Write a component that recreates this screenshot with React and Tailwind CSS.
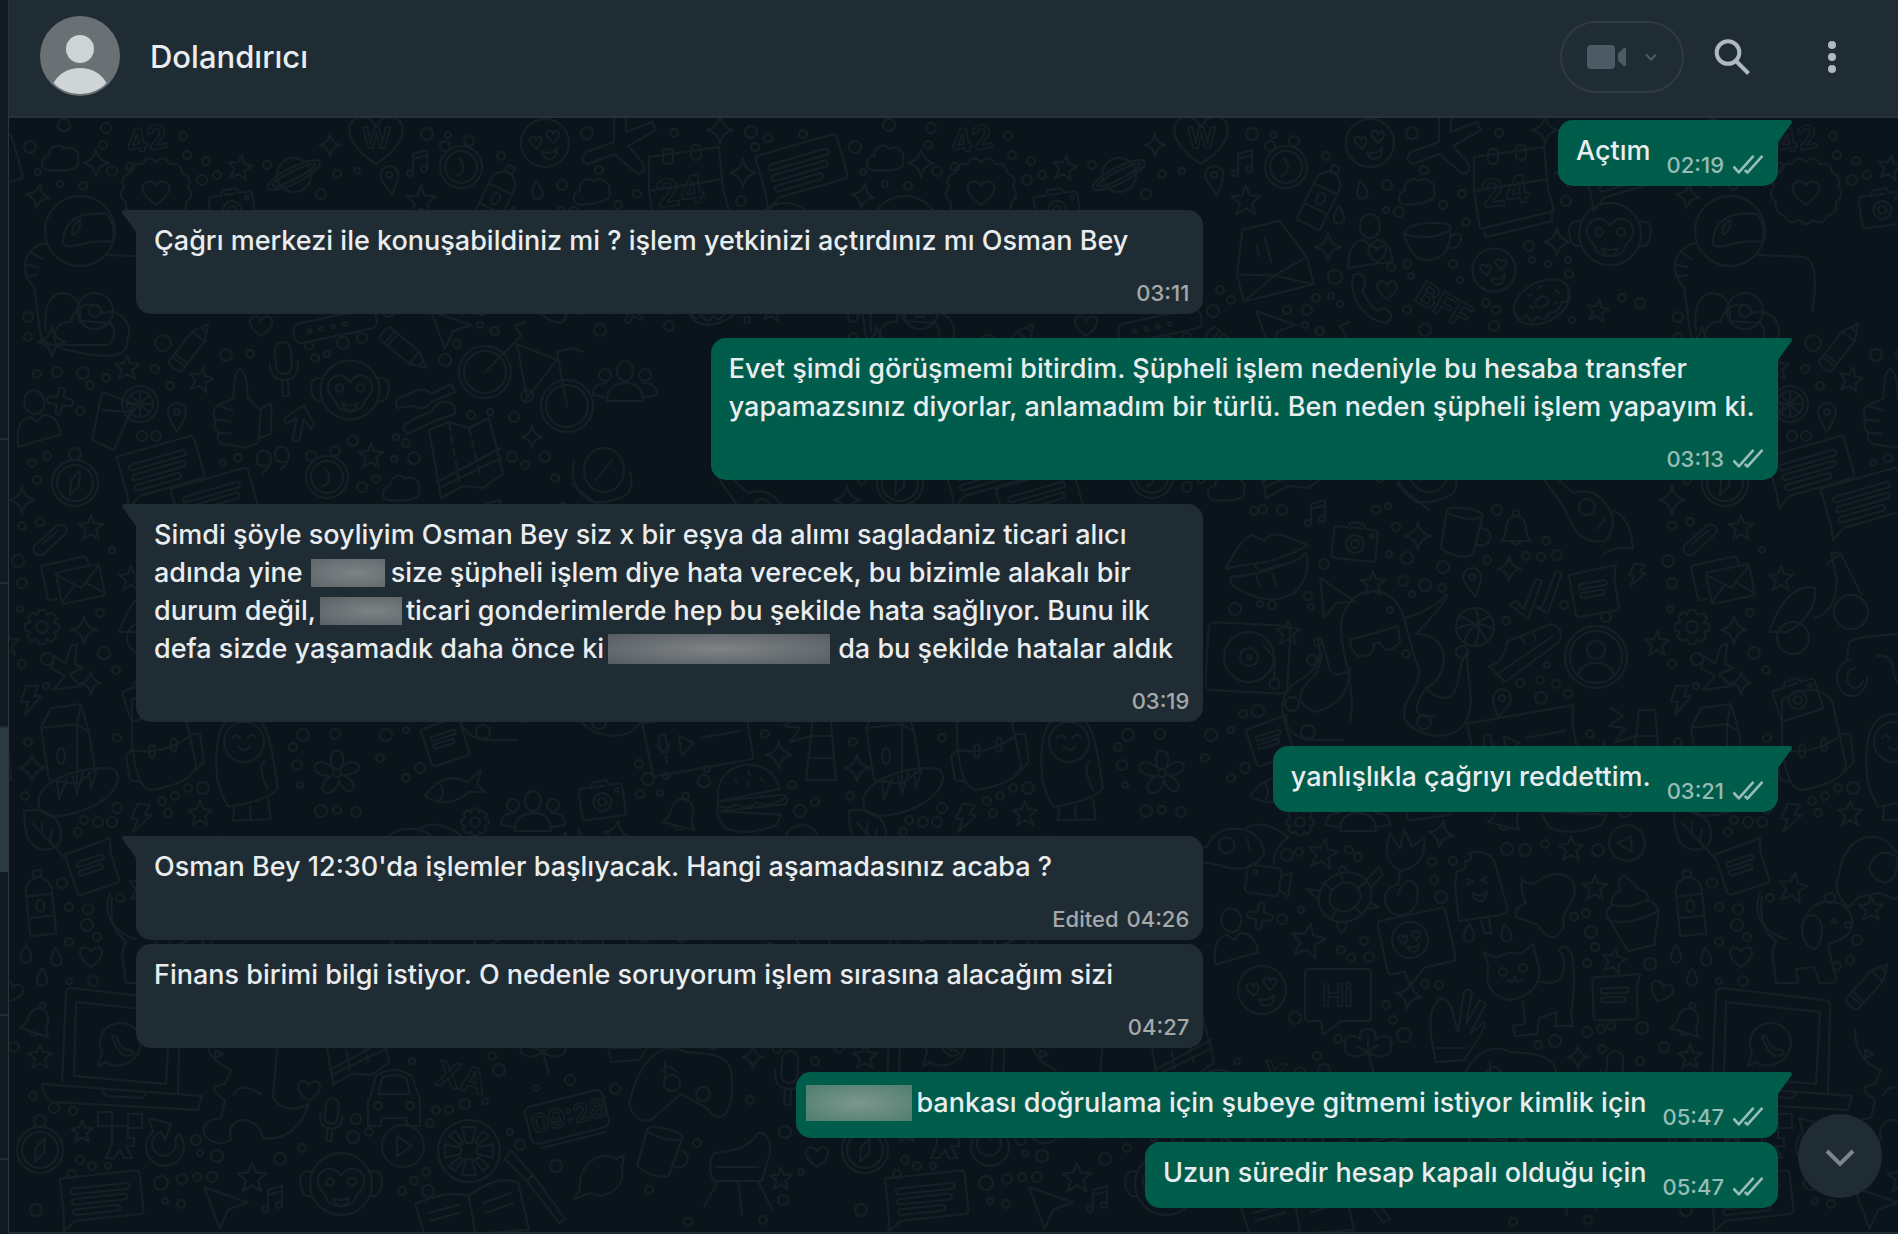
import React from 'react';

const MESSAGES = [
  { id: 1, out: true, tail: true, time: '02:19', lines: [['Açtım']] },
  {
    id: 2,
    tail: true,
    stacked: true,
    time: '03:11',
    lines: [['Çağrı merkezi ile konuşabildiniz mi ? işlem yetkinizi açtırdınız mı Osman Bey']],
  },
  {
    id: 3,
    out: true,
    tail: true,
    stacked: true,
    time: '03:13',
    lines: [
      ['Evet şimdi görüşmemi bitirdim. Şüpheli işlem nedeniyle bu hesaba transfer'],
      ['yapamazsınız diyorlar, anlamadım bir türlü. Ben neden şüpheli işlem yapayım ki.'],
    ],
  },
  {
    id: 4,
    tail: true,
    stacked: true,
    time: '03:19',
    lines: [
      ['Simdi şöyle soyliyim Osman Bey siz x bir eşya da alımı sagladaniz ticari alıcı'],
      ['adında yine', { mask: 'short' }, 'size şüpheli işlem diye hata verecek, bu bizimle alakalı bir'],
      ['durum değil,', { mask: 'medium' }, 'ticari gonderimlerde hep bu şekilde hata sağlıyor. Bunu ilk'],
      ['defa sizde yaşamadık daha önce ki', { mask: 'long' }, 'da bu şekilde hatalar aldık'],
    ],
  },
  { id: 5, out: true, tail: true, time: '03:21', lines: [['yanlışlıkla çağrıyı reddettim.']] },
  {
    id: 6,
    tail: true,
    stacked: true,
    edited: true,
    time: '04:26',
    lines: [["Osman Bey 12:30'da işlemler başlıyacak. Hangi aşamadasınız acaba ?"]],
  },
  {
    id: 7,
    stacked: true,
    time: '04:27',
    lines: [['Finans birimi bilgi istiyor. O nedenle soruyorum işlem sırasına alacağım sizi']],
  },
  {
    id: 8,
    out: true,
    tail: true,
    time: '05:47',
    lines: [[{ mask: 'green' }, 'bankası doğrulama için şubeye gitmemi istiyor kimlik için']],
  },
  { id: 9, out: true, time: '05:47', lines: [['Uzun süredir hesap kapalı olduğu için']] },
];

const MASKS = {
  short: 'ml-2 mr-1.5 h-7 w-[74px] bg-[radial-gradient(ellipse_at_60%_50%,#7d8285,#5f666a)]',
  medium: 'ml-1 mr-1 h-7 w-[82px] bg-[radial-gradient(ellipse_at_65%_50%,#7d8285,#5a6165)]',
  long: 'ml-1 mr-2 h-[30px] w-[222px] bg-[radial-gradient(ellipse_at_50%_50%,#7f8386,#565d62)]',
  green: '-ml-2 mr-1 h-9 w-[106px] bg-[radial-gradient(ellipse_at_50%_50%,#7e978d,#4d7e6e)]',
};

// Wallpaper shapes, each drawn around its own centre
const SHAPES = {
  star: <path d="M0-12 3-4 12-3 5 3 8 12 0 7-8 12-5 3-12-3-3-4Z" />,
  sparkle: <path d="M0-14Q2-2 13 0 2 2 0 14-2 2-13 0-2-2 0-14Z" />,
  heart: <path d="M0 10C-9 4-12-1-11-6-9-11-2-11 0-5 2-11 9-11 11-6 12-1 9 4 0 10Z" />,
  drop: <path d="M0-9C4-3 6 1 5 5 3 10-3 10-5 5-6 1-4-3 0-9Z" />,
  cloud: <path d="M-14 12C-22 10-20-2-12-2-12-13 0-15 3-9 10-14 20-6 17 2 20 10 10 14-14 12Z" />,
  bolt: <path d="M-5-14H7L3-4H10L-6 15-3 2H-10Z" />,
  pin: <g><path d="M0 15C-6 4-9 0-9-5A9 9 0 0 1 9-5C9 0 6 4 0 15Z" /><circle cy="-5" r="3" /></g>,
  music: <g><path d="M-5 9V-9L9-13V5M-5-4 9-8" /><circle cx="-8" cy="10" r="3" /><circle cx="6" cy="6" r="3" /></g>,
  clock: <g><circle r="21" /><circle r="16" /><path d="M-2-9Q5-1 0 7L-5 9" /><circle cx="-16" cy="-21" r="5" /><circle cx="8" cy="-26" r="5" /></g>,
  compass: <g><circle r="23" /><circle r="18" /><path d="M5-12 4 3-5 12-4-3Z" /><circle cy="-29" r="6" /></g>,
  camera: <g><path d="M-22-11Q-22-14-18-14H-9L-7-19H7L9-14H18Q22-14 22-10V15Q22 18 18 18H-18Q-22 18-22 14Z" /><circle cy="2" r="9" /><circle cy="2" r="4" /><path d="M-5-14H5" /><circle cx="16" cy="-8" r="2" /></g>,
  bell: <g><path d="M-15 13Q-10 9-10-1-9-11 0-12 9-11 10-1 10 9 15 13Z" /><circle cy="-15" r="3" /><path d="M-5 13Q0 20 5 13" /></g>,
  pencil: <g><path d="M-8 26V-12L0-28 8-12V26Q0 31-8 26ZM-8-12H8M-8 16H8M-8 20H8M-3-21H3" /></g>,
  mic: <g><rect x="-8" y="-26" width="16" height="32" rx="8" /><path d="M-14-6Q-15 12 0 12T14-6M-3 13V28H3V13" /></g>,
  chat: <g><path d="M-42-24H38Q42-24 42-20V18Q42 22 38 22H-30L-44 32-42 16Z" /><rect x="-32" y="-12" width="62" height="6" rx="3" /><rect x="-32" y="-1" width="58" height="6" rx="3" /><rect x="-32" y="10" width="50" height="6" rx="3" /></g>,
  note: <g><path d="M-22-20 26-22 22-8V20Q22 23 18 23H-18Q-22 23-22 19Z" /><rect x="-14" y="-9" width="28" height="5" rx="2" /><rect x="-14" y="0" width="24" height="5" rx="2" /></g>,
  envelope: <g><path d="M-36 8-20-34H18L36 8V36H-36ZM-36 8 0 18 36 8M-36 36 0 18 36 36M-10-4V-16M0 4V-22" /></g>,
  mail: <g><rect x="-22" y="-14" width="44" height="32" rx="3" /><path d="M-22-12 0 6 22-12M-22 16-6 2M22 16 6 2M-26 12H-32Q-35 12-35 8V-20Q-35-24-31-24H8Q12-24 12-20V-16" /></g>,
  face: <g><circle r="24" /><path d="M-3 9Q7 12 12 5 12 16 4 16-2 15-3 9Z" /><path d="M-8 6-15-1Q-17-6-12-6-9-6-9-3-6-8-4-5-2-1-8 6ZM8 0 2-7Q0-12 5-12 8-12 8-9 11-14 14-10 15-6 8 0Z" /></g>,
  person: <g><ellipse cy="-20" rx="10" ry="12" /><path d="M-22 22Q-22-5-6-6L0 0 7-6Q22-4 22 16 2 18-22 22Z" /></g>,
  people: <g><ellipse cy="-14" rx="8" ry="10" /><path d="M-18 16Q-18-2 0-2T18 16Z" /><circle cx="-20" cy="-10" r="6" /><circle cx="20" cy="-10" r="6" /><path d="M-20 12-32 10Q-32-2-18-2M20 12 32 10Q32-2 18-2" /></g>,
  avatar: <g><circle r="31" /><circle r="26" /><circle cy="-7" r="9" /><path d="M-18 18Q-14 6 0 6T18 18" /></g>,
  monkey: <g><circle r="31" /><path d="M-28-12Q-44-16-40 4-37 14-29 12M28-12Q44-16 40 4 37 14 29 12M0-8C-8-22-26-14-23 0-22 5-18 8-15 12-14 26 14 26 15 12 18 8 22 5 23 0 26-14 8-22 0-8Z" /><circle cx="-11" cy="-2" r="4" /><circle cx="11" cy="-2" r="4" /><path d="M-8 14Q0 18 8 14 6 22 0 22T-8 14Z" /></g>,
  astronaut: <g><circle r="35" /><path d="M-17 10C-16-8-4-20 27-17 34-8 35 4 32 11 14 8 2 14-8 15-14 16-18 14-17 10Z" /><path d="M-8 2Q-7-8 0-11 2-4-6 4ZM-33 12Q-48 14-54 28-58 44-46 56L-40 100Q-38 116-20 114H28Q40 104 30 92L0 90Q2 62-20 62-38 68-34 100M-48 22-38 28M-54 34-42 36M-54 46-43 44" /><path d="M28 24 76 26Q90 36 82 80" /><circle cx="15" cy="80" r="18" /><circle cx="15" cy="80" r="6" /></g>,
  planet: <g><circle r="17" /><ellipse rx="29" ry="8" transform="rotate(-27)" /><ellipse rx="24" ry="4" transform="rotate(-27)" /></g>,
  badge: <g><path d="M0-30Q8-38 14-28 25-30 26-19 37-15 32-5 39 4 30 10 32 21 21 24 17 34 7 28 0 36-7 28-17 34-21 24-32 21-30 10-39 4-32-5-37-15-26-19-25-30-14-28-8-38 0-30Z" /><path d="M0 13C-12 4-16-3-12-8-8-12-2-11 0-6 2-11 8-12 12-8 16-3 12 4 0 13Z" /></g>,
  calendar: <g><path d="M-36-38 34-48 38-6 44 16-30 34-36-4ZM-36-4 38-16M-26 36-24 42 42 26 42 18" /><rect x="-22" y="-46" width="10" height="15" rx="4" /><rect x="6" y="-50" width="10" height="15" rx="4" /></g>,
  bottle: <g><path d="M-13 32V-12Q-12-24 0-26 12-24 13-12V32ZM-13-8H13M-13 14H13" /><rect x="-4" y="-33" width="8" height="7" rx="2" /><ellipse cy="3" rx="4" ry="6" /></g>,
  cup: <g><path d="M-26-8Q-24-18 0-19T20-12Q22-2 14 12 0 22-12 16-22 8-26-8ZM-26-8Q0 0 20-12M20-6Q32-12 31-2 28 8 17 6" /></g>,
  mug: <g><ellipse cy="-20" rx="18" ry="5" /><path d="M-18-20-19 18Q0 28 14 20L18-20M17-8Q31-8 28 4 24 12 15 9" /></g>,
  phone: <g><path d="M-14-24Q-6-28-4-20-2-12-7-8-2 6 6 14 12 8 18 16 22 22 14 26-2 24-12 6-20-12-14-24Z" /></g>,
  donut: <g><ellipse rx="30" ry="20" transform="rotate(-28)" /><ellipse rx="7" ry="5" transform="rotate(-28)" /><path d="M-28 10Q-20 22-16 12-10 24-4 14 2 22 8 10 16 12 20 0 28 2 26-12M-14-6-10-8M-4-14 0-16M14-12 17-9M12 2 15 0M-12 4-9 6" /></g>,
  bicycle: <g><circle cx="-42" cy="-16" r="26" /><circle cx="-42" cy="-16" r="21" /><circle cx="40" cy="18" r="26" /><circle cx="40" cy="18" r="21" /><path d="M-42-16-6-52-12-62-2-66M-10-44 0 10M-10-44 30-28 0 10M40 18 30-36 46-40 56-36" /><circle cy="8" r="6" /></g>,
  thumb: <g><path d="M-22 0-6-8Q-8-34-2-38 6-36 8-10L22 2V34L10 40-14 38Q-22 34-18 28-26 22-22 16-28 8-22 0ZM22 0 32-6 34 24 22 30M-22 0-6 4M-22 14-8 15M-18 27-6 27" /></g>,
  drink: <g><path d="M-10-28 22-16 2 30-20 20ZM-10-10 18-8" /><circle cx="28" cy="-16" r="18" /><circle cx="28" cy="-16" r="13" /><path d="M28-29V-3M15-16H41M19-25 37-7M37-25 19-7" /></g>,
  plus: <path d="M-3-12Q0-15 3-12V-4L12-3Q14 0 12 3L3 4 2 13Q0 15-3 12V4L-12 3Q-14 0-12-3L-3-3Z" />,
  arrow: <path d="M-4 18V-4L-14 4-16-2 0-18 14-2 12 4 3-5V18Z" />,
  plane: <path d="M-18-18 22-4 4 2-4 20Z" />,
  quotes: <path d="M-6 6Q-16 8-15-4-12-12-4-8 4 2-10 14M12 2Q2 4 3-8 6-16 14-12 22-2 8 10" />,
  map: <g><path d="M-36-30-16-38 4-32 24-42 38 14 18 28-2 26-24 38ZM-28 22 36-12M-26 28 36-2" /><path strokeDasharray="8 5" d="M-16-38-6 22M4-32 16 18" /></g>,
  wrench: <path d="M-30 6Q-34-4-22-6L-10-12Q0-14 4-8L24-18 28-10 4 0Q-2 10-14 4ZM-24 24Q-10 14 4 10 10-2 22 0 30 4 28 12L10 18-20 32Z" />,
  bar: <g><rect x="-42" y="-10" width="84" height="20" rx="7" /><circle cx="-26" r="2" /><circle cx="-14" r="2" /><circle cx="-2" r="2" /><circle cx="10" r="2" /></g>,
  clip: <path d="M-16 6 6-14Q16-18 17-8L-6 14Q-18 18-16 6ZM-8 4 8-9" />,
  gear: <g><path d="M-3-17H3L5-12 10-14 15-9 12-4 17-3V3L12 5 14 10 9 15 5 12 3 17H-3L-5 12-10 14-15 9-12 5-17 3V-3L-12-5-14-10-9-15-5-12Z" /><circle r="6" /></g>,
  zigzag: <path d="M-12-12-2-4 4-22 10-24 8-4 16 0 2 6 14 18-14 22-2 8-16 0Z" />,
  lips: <g><path d="M-42 16Q-28-14-16-18L-4-12Q2-20 14-18L40-8Q16 6-8 10-28 12-42 16Z" /><path d="M-38 24Q-8 22 14 12 32 8 38 0 44 22 26 40 0 56-36 32ZM-14 12-8 18 12 12M-12 22-8 34M4 20 8 32" /></g>,
  guitar: <g><path d="M-30-34-6-12Q14-18 26-2 42 18 26 36 4 40-8 18-16-2-30-18L-36-28Z" /><circle cx="8" cy="2" r="8" /><path d="M18 24 26 14M34 6Q52 12 54 44 36 40 24 50" /></g>,
  checks: <path d="M-26 12-20 8-12 16 0-14 6-12-8 26ZM0 14 6 14 20-22 26-20 12 20Z" />,
  ball: <g><circle r="19" /><path d="M-15-11Q4-4 12 15M15-11Q-6-2-11 15M0-19Q8 0 0 19M-19 2Q0-8 19 2" /></g>,
  shoe: <path d="M-36 14Q-20 10-18-10L-14-12 26-28Q40-24 34-10L-20 30ZM-28 22 28-16M-4-14 0-8M8-19 11-12" />,
  octopus: <g><path d="M-30 46C-22 10-44-34-38-58-28-94 14-94 24-58 30-38 32-22 38-10 44 10 22 20 24 40 28 60 78 72 88 40 96 20 84-4 88-24 76-14 82 16 68 22 54 22 50 16 46 12" /><path d="M24-58Q54-66 66-82 72-80 36-42 62-42 64-18 62 6 46 12 24 44 54 40M-34-4Q-50 4-52-14L-58-36Q-64-40-60-24-60-6-84 6C-106 20-102 60-70 64H-38M-30-8Q-30 26-64 36-92 26-70 4-60-4-58-24" /><path d="M-30-36 18-50 20-34Q6-18 0-34L-6-32Q-6-18-22-20-30-26-30-36Z" /><circle cx="10" cy="-66" r="3" /><circle cx="26" cy="-22" r="4" /><circle cx="-88" cy="28" r="7" /><circle cx="-72" cy="56" r="7" /><circle cx="44" cy="46" r="7" /></g>,
  turntable: <g><rect x="-42" y="-33" width="82" height="68" rx="6" /><circle r="25" /><circle r="9" /><circle r="2" /><path d="M14-12 26 0V22" /><circle cx="27" cy="25" r="5" /></g>,
  milk: <g><path d="M-28-14 8-18 20-10 26 28 8 42-20 38ZM-28-14-18-34 12-38 20-10M8-18 12-38M8-18 8 42" /><ellipse cx="-8" cy="14" rx="4" ry="8" /></g>,
  backpack: <g><path d="M-30-42Q0-62 20-42L34 22Q34 40-10 48-26 48-30 0ZM-30 8Q0 14 28-6M-30 8-36 14-32 38-22 40M28-8 38-8 42 20 34 28" /><ellipse cx="-10" cy="9" rx="3" ry="7" /><ellipse cx="12" cy="3" rx="3" ry="7" /></g>,
  penguin: <g><path d="M-28 8C-30-30-24-56 0-56S28-26 32 20Q20 32-18 36-26 22-28 8ZM-12 36-14 50H24L22 30M4 36V50" /><circle cy="-28" r="20" /><path d="M-12-32Q-8-38-4-32M4-32Q8-38 12-32M-6-24Q0-16 6-24M20-8Q12-4 22 20" /></g>,
  flower: <g><circle r="4" /><path d="M-4-5C-14-28 14-28 4-5 22-22 32 2 6 2 28 12 10 30 2 7-2 30-28 18-6 3-32 4-24-22-4-5Z" /></g>,
  burger: <g><path d="M-32 0C-34-40 24-44 30-6L-32 2 34 0Q40 6 34 10L-32 12 30 20 24 30Q-10 40-28 28L-34 16ZM-32 6Q-24 12-14 6-4 14 6 6 18 12 34 4" /><path d="M-14-20-12-16M0-26 1-22M12-18 15-15M-2-14 0-11" /></g>,
  voice: <g><path d="M-54-28H54L50-10V22Q50 26 46 26H-48Q-52 26-52 22Z" /><rect x="-40" y="-14" width="7" height="16" rx="3" /><path d="M-43-4Q-36 14-30-4M-36 8V14M-20-10-6 0-20 10ZM2-4H42" /></g>,
  tower: <path d="M-14 28-6-42H10L16 28ZM-10-16H12M-12 6H14M-34-44-22-36-36-26-20-24-30-10-8-16" />,
  bread: <path d="M-38 14C-46-14 20-30 38-22 50-8 22 22-22 24Q-36 24-38 14ZM-20-10-18 8-10-14M-4-16 0 2 6-20M12-20 14-4 20-23" />,
  leaf: <path d="M-20-24C8-30 24-8 14 10Q-4 22-16 4-20-10-20-24ZM-12-12 22 24M-2-2-2-12M6 6 8-6" />,
  fish: <path d="M-28 8Q-10-18 14-6L28-18 24-4 32 4 16 4Q-6 22-28 8ZM-14-6Q-6 4-14 14" />,
  laptop: <g><path d="M-60 34-56-54Q-56-60-50-60L52-48Q58-48 58-42L56 46M-48 28-46-46 48-36 44 36ZM-80 36 80 48 76 62-70 54Q-80 48-80 36ZM-20 42-16 48 20 50 24 46" /><path d="M-24 18-20 4C-30-20 0-36 16-16 28 6 0 26-16 14Z" /><path d="M-10-12Q-6-14-4-8-4-4 4 2 10 0 12 6-2 14-10-12Z" /></g>,
  dino: <path d="M-40-50Q-40-20-14-10L-20 4Q-36 6-28 14L-20 20-24 38Q-46 40-40 56-28 68-14 60-18 44-4 40 14 40 18 58 50 62 64 24 40 36 28 18L30-6 34-50M-12 16Q-6 0 16 14M-30-30-22-26-30-22Z" />,
  car: <g><path d="M-24 0-18-22Q0-34 18-22L26 2 26 28H14L12 20H-12L-14 28H-26V2ZM-16-4-12-20Q0-26 12-20L16-4Z" /><circle cx="-16" cy="8" r="4" /><circle cx="16" cy="8" r="4" /></g>,
  clover: <path d="M0 2C-10 10-26 6-22-3-28-14-12-18-7-10-14-24 12-26 7-10 14-18 28-12 22-3 26 6 10 10 0 2L6 24M-10-3 0 2 10-5M0-12V2" />,
  hand: <path d="M-18 40-22 20Q-28-16-12-24-2-20 0-4L4 10 10-30Q16-36 18-28L12 2 26-22 32-18 16 12 30 0Q34 4 10 38ZM-18 26 12 26" />,
  blocks: <path d="M-22-22H-8V-8H-22ZM8-20H22V-6H8ZM-8-8H8V4H14V12H6L12 24H4L0 16-6 24H-14L-8 10V4Z" />,
  reload: <path d="M-12-14A19 19 0 1 0 14-12M-12-14-16-28 6-22 0-6-4-14A12 12 0 1 0 10-7L14-12" />,
  play: <g><circle r="21" /><path d="M-6-10 9 0-6 10Z" /></g>,
  citrus: <g><circle r="31" /><path d="M-3-8-7-24H7L3-8ZM-3 8-7 24H7L3 8ZM-8-3-24-7V7L-8 3ZM8-3 24-7V7L8 3ZM-9-6-20-15-14-20-6-9ZM9-6 20-15 14-20 6-9ZM-9 6-20 15-14 20-6 9ZM9 6 20 15 14 20 6 9Z" /></g>,
  plate: <g><rect x="-40" y="-19" width="80" height="38" rx="6" /><path d="M-32 24H34" /></g>,
  lemon: <path d="M-20 14C-22-10 0-26 16-16L24-20 22-8C26 14 4 26-10 18L-26 24Z" />,
  brush: <path d="M-26-36-4-12-10-6-32-28ZM-4-12 28 32 22 36-10-6" />,
  book: <g><path d="M-54-14Q-20-26 0-18 30-38 50-28L58 20H-46ZM0-18 4 20M-42-4-10-10M-40 4-10-2M14-10 42-18M16 0 44-8" /></g>,
  video: <g><rect x="-22" y="-15" width="34" height="28" rx="4" /><path d="M12-8 22-12V12L12 6" /><circle cx="-14" cy="-8" r="2" /></g>,
  turtle: <g><ellipse rx="27" ry="24" transform="rotate(-30)" /><ellipse rx="16" ry="14" transform="rotate(-30)" /><path d="M-6-26Q-4-36 2-26M22-18 34-30 38-22 26-10M-26-6-38-8-28 2M-8 25Q-4 46 2 26M24 12 34 10 26 6M-14-8-22-14M12-8 22-16M-8 12-14 22M10 10 18 18M-2-14-4-24" /></g>,
  plant: <path d="M-4-2C-24-14-16-30-14-40L-4-24 0-44 8-26 20-36Q24-8-4-2L-6 12C-26 14-22 44-2 42 18 40 18 6 4 8-2 12-6 18-6 22" />,
  ice: <g><path d="M-26-2-22 34 20 28Q28 26 26 20L14-24Q8-38-12-34-6-26-16-26-12-16-24-16ZM0 34 4 46H10L8 32" /><path d="M-14-8-8-6-14-2M6-10 0-7 6-4M-8 6Q0 12 6 4 4 16-2 14T-8 6Z" /></g>,
  blob: <path d="M-24-24Q-16-14-2-26C18-34 32-24 28-8 24 6 14 10 18 24L10 34Q0 36-8 22L-30 14Q-32 4-20 0-26-12-24-24Z" />,
  cupcake: <path d="M-10-38Q0-30 4-24 16-22 14-12 26-10 24 4L20 32-6 38-24 8Q-32 0-22-8-24-18-14-22-18-32-10-38ZM-24 8Q0 12 24-2M-20-8Q0-4 14-14" />,
  cat: <g><path d="M-46-14C-44-18-44-28-50-38L-36-32Q-24-40-12-36L0-46 4-30C12-10 0 6-22 10-36 8-46 0-46-14ZM8-8Q26-4 30-16 34-30 26-40 30-48 38-38 44-14 38 24L40 36H22L24 22 6 28 4 44-18 46-20 36-8 34-10 12" /><circle cx="-30" cy="-18" r="4" /><circle cx="-10" cy="-22" r="4" /><path d="M-26-10-20-8-18-13-16-8-10-10" /></g>,
  bubble: <path d="M-30-28H28Q32-28 32-24V20Q32 24 28 24H2L-16 38-18 24H-30Q-34 24-34 20V-24Q-34-28-30-28Z" />,
  dog: <g><path d="M-50-50C-60-24-40-8-24-4M-8-12C-8-32 8-46 28-40 46-34 48-10 30-4L18 2 24 28Q32 42 10 40L4 24-14 26-12 40H-34L-36 24Q-40 10-34-2-52-14-48-46" /><path d="M-6-24Q6-34 12-18 12 4 4 6-12 0-6-24Z" /><circle cx="24" cy="-22" r="2" /><circle cx="38" cy="-18" r="3" /></g>,
  elephant: <path d="M-30 0C-26-40 10-50 26-24 44-20 44 14 26 24L10 18-10 22-20 32Q-38 18-30 0ZM0-8Q8-30 28-18 30 4 16 8 2 4 0-8Z" />,
  headset: <path d="M-20-28Q-10-34 30-36M-20-28-22-10M-18-10A15 18 0 1 0-2 8M-14-2A8 10 0 1 0-6 10M8-14Q22-16 24-2 26 16 40 22" />,
  chair: <path d="M-24-14Q10-16 20-34 34-34 32-14L24 14H-24Q-32 0-24-14ZM-20 14-34 40M20 14 34 42M0 14 4 48M-22 0H20" />,
  pad: <path d="M-52 24C-42-20-20-40 4-28 24-26 44-28 50-10 56 30 40 50 26 28L0 14-30 40Q-46 44-52 24ZM-20-8-12-14-4-8M-16-2V-18" />,
  jet: <path d="M2-42 2-6-26 4Q-34 12-24 16L2 6 26 26Q36 24 30 14L16-2 44-18 40-26 14-16V-42" />,
  scooter: <g><circle cx="-14" cy="26" r="16" /><circle cx="44" cy="0" r="17" /><path d="M-38 20Q-20-30 8-24 10 4-20 20ZM8 6Q28 0 30-30L24-60 34-58 54-18M20-48 34-58" /></g>,
  balloon: <g><ellipse rx="20" ry="22" /><path d="M8-10-8 10M-30-10Q-36 20-12 32 6 34 24 24 30 14 26 2M-32 14 0 40" /></g>,
};

const DOODLES = [
  ['badge', 156, 192], ['cloud', 61, 158], ['sparkle', 96, 163], ['star', 240, 167, 10], ['planet', 294, 175], ['sparkle', 330, 145, 0, 0.8],
  ['sparkle', 38, 196, 10, 0.9], ['astronaut', 80, 231], ['camera', 232, 208, -8], ['pin', 390, 180, -8], ['heart', 376, 140, 0, 2.4],
  ['calendar', 685, 195], ['face', 545, 143], ['jet', 612, 148], ['cloud', 592, 191, -8], ['music', 418, 163], ['clock', 461, 167],
  ['bottle', 497, 196, 26], ['star', 421, 200, 0, 1.2], ['envelope', 445, 258, -14], ['sparkle', 503, 247], ['person', 545, 246], ['heart', 552, 254, 0, 0.8],
  ['cup', 605, 242], ['face', 669, 270, 0, 0.9], ['phone', 545, 298, -6], ['heart', 562, 290, 0, 0.9], ['donut', 717, 302], ['monkey', 785, 234],
  ['sparkle', 732, 242], ['star', 773, 310, 10, 0.9], ['sparkle', 720, 130], ['drop', 537, 190, -10], ['drop', 514, 215], ['sparkle', 743, 173],
  ['chat', 802, 168, -16], ['pencil', 191, 346, 38], ['heart', 261, 326], ['bar', 335, 326, -12], ['mic', 284, 368, -4], ['monkey', 350, 390, 0, 0.95],
  ['pencil', 405, 350, 130], ['plane', 449, 329], ['bicycle', 527, 388], ['star', 127, 367], ['star', 201, 379, 12], ['thumb', 239, 407, 4],
  ['drink', 112, 420], ['person', 37, 422, -8], ['plus', 60, 401, 8], ['pin', 177, 417], ['arrow', 300, 423, 12], ['compass', 75, 483],
  ['chat', 161, 468, -16, 0.95], ['chat', 215, 500, -16, 0.95], ['quotes', 272, 460], ['clock', 327, 477], ['star', 371, 455], ['cloud', 402, 488],
  ['map', 465, 460], ['sparkle', 532, 437, 0, 0.8], ['balloon', 604, 470], ['sparkle', 52, 342, 0, 1.1], ['cloud', 94, 330, 10, 2], ['wrench', 427, 402],
  ['people', 625, 385], ['sparkle', 22, 500], ['star', 91, 527], ['clip', 50, 540], ['mail', 80, 582, -12], ['gear', 42, 627], ['sparkle', 84, 630],
  ['zigzag', 67, 668], ['sparkle', 91, 683, 0, 0.8], ['bolt', 31, 700], ['star', 131, 578], ['music', 491, 513], ['lips', 443, 553], ['camera', 530, 542, 6],
  ['sparkle', 593, 536], ['mug', 637, 533, 8], ['bell', 691, 528], ['guitar', 754, 505], ['star', 548, 583], ['pin', 648, 582, -10],
  ['sparkle', 684, 569, 0, 0.9], ['checks', 711, 593], ['note', 769, 591, -10], ['bolt', 812, 575, 10, 0.8], ['plane', 508, 600, 15], ['octopus', 555, 676],
  ['ball', 650, 627], ['shoe', 700, 652], ['avatar', 771, 657], ['turntable', 424, 657, 3], ['pin', 676, 703, 12], ['star', 463, 632],
  ['milk', 69, 742], ['backpack', 162, 742], ['scooter', 157, 612], ['star', 7, 643], ['camera', 147, 698, -18], ['headset', 219, 670],
  ['voice', 700, 742, -10], ['sparkle', 779, 755], ['tower', 820, 752], ['sparkle', 32, 768], ['bread', 77, 792], ['burger', 750, 797, -4],
  ['bell', 682, 812, 14, 1.1], ['camera', 602, 800, -8], ['penguin', 245, 770, -2], ['flower', 337, 773], ['bolt', 141, 818, 8], ['star', 200, 813],
  ['guitar', 395, 850, -50], ['leaf', 44, 835], ['note', 445, 741, -18, 0.9], ['fish', 453, 788], ['gear', 475, 822, 0, 0.8], ['people', 533, 815],
  ['note', 92, 867, -18], ['bottle', 40, 903, -6], ['drop', 26, 954], ['drop', 56, 957, -8], ['drop', 42, 977], ['heart', 91, 957], ['bell', 38, 1020, 18],
  ['star', 40, 1056], ['laptop', 122, 1048], ['dino', 245, 1080], ['map', 355, 1050, 0, 0.9], ['heart', 309, 1091], ['mic', 331, 1119, 6, 0.8],
  ['car', 394, 1098], ['clover', 543, 1050], ['hand', 629, 1022], ['compass', 40, 1150], ['star', 82, 1131, 0, 0.9], ['blocks', 120, 1134], ['reload', 165, 1146],
  ['play', 403, 1146], ['citrus', 469, 1151], ['plate', 567, 1117, -14], ['lemon', 600, 1175], ['chat', 102, 1197, -6, 0.95], ['star', 252, 1177, 0, 1.2],
  ['plane', 224, 1207, 0, 1.1], ['music', 273, 1199], ['monkey', 341, 1184], ['brush', 537, 1187], ['book', 470, 1214, -4], ['person', 409, 940, -8],
  ['plus', 435, 916, 8], ['face', 437, 990], ['chair', 738, 1167], ['mug', 660, 1153, 14], ['pad', 681, 1080], ['mic', 789, 1077, 4], ['sparkle', 753, 1057, 0, 0.8],
  ['heart', 817, 1157], ['star', 781, 1178, 0, 0.9], ['video', 443, 882, 8], ['turtle', 520, 897], ['plant', 579, 873], ['ice', 656, 887], ['blob', 721, 903],
  ['cupcake', 809, 913], ['bubble', 593, 943, -12, 1.05], ['face', 585, 940, 0, 0.75], ['cat', 708, 990], ['bubble', 514, 997], ['star', 483, 940, 10, 1.4],
  ['note', 790, 997, -2], ['heart', 11, 992, 20], ['star', 498, 853, 10, 1.2], ['star', 770, 887], ['star', 789, 960, 10], ['sparkle', 616, 834, 10],
  ['sparkle', 584, 995, 10], ['star', 746, 848], ['play', 802, 843, -60, 0.85], ['drop', 644, 933], ['drop', 681, 933, -10], ['dog', 160, 943],
  ['elephant', 219, 875], ['star', 143, 887, 10, 1.2], ['pencil', 219, 985, 42], ['star', 221, 908],
];

const DOTS = [
  [64, 125, 6], [106, 128, 5], [30, 147, 6], [103, 145, 4], [183, 136, 4], [187, 155, 4], [206, 161, 4], [130, 167, 4], [112, 171, 5], [38, 172, 3],
  [202, 180, 5], [217, 175, 4], [267, 165, 4], [60, 184, 3], [83, 186, 4], [321, 194, 5], [337, 174, 4], [357, 171, 3], [427, 134, 6], [448, 135, 3],
  [501, 156, 4], [587, 133, 6], [562, 185, 5], [599, 170, 4], [561, 210, 3], [574, 212, 5], [618, 205, 4], [637, 194, 4], [641, 222, 4], [674, 133, 4],
  [751, 132, 6], [768, 138, 4], [803, 134, 4], [755, 147, 4], [741, 201, 5], [704, 246, 5], [707, 260, 3], [723, 264, 3], [743, 260, 3], [744, 274, 4],
  [566, 267, 4], [582, 264, 4], [586, 276, 3], [628, 264, 4], [635, 280, 3], [582, 310, 4], [600, 330, 6], [510, 277, 7], [491, 298, 4], [506, 296, 3],
  [515, 304, 3], [482, 310, 5], [462, 310, 4], [494, 331, 4], [406, 300, 4], [388, 311, 6], [395, 290, 4], [661, 303, 4], [671, 310, 4], [669, 326, 5],
  [747, 320, 3], [797, 298, 4], [815, 303, 5], [28, 317, 5], [28, 337, 4], [163, 343, 8], [226, 355, 6], [250, 354, 4], [155, 369, 4], [83, 373, 6],
  [57, 372, 5], [37, 374, 4], [90, 385, 4], [106, 378, 4], [170, 386, 4], [343, 343, 6], [362, 338, 5], [309, 346, 4], [315, 358, 4], [327, 354, 3],
  [445, 360, 6], [457, 344, 4], [480, 325, 3], [495, 331, 4], [142, 436, 5], [156, 436, 5], [80, 411, 4], [514, 417, 5], [490, 412, 3], [471, 415, 4],
  [353, 441, 5], [396, 437, 3], [406, 443, 4], [414, 458, 6], [394, 459, 3], [512, 457, 5], [545, 457, 5], [525, 465, 4], [555, 478, 4], [238, 458, 4],
  [223, 463, 3], [47, 456, 4], [32, 463, 4], [37, 480, 4], [362, 487, 5], [376, 479, 4], [22, 526, 4], [40, 522, 4], [18, 561, 6], [22, 583, 5],
  [112, 550, 3], [20, 609, 3], [104, 653, 6], [47, 659, 6], [100, 613, 4], [116, 670, 4], [22, 664, 4], [46, 686, 3], [429, 511, 4], [438, 509, 4],
  [457, 510, 5], [571, 527, 4], [551, 510, 4], [563, 506, 3], [499, 564, 5], [564, 554, 3], [582, 558, 6], [578, 581, 5], [600, 585, 6], [617, 588, 4],
  [618, 567, 6], [662, 560, 4], [587, 594, 3], [701, 556, 4], [716, 557, 4], [732, 555, 5], [721, 541, 4], [672, 510, 5], [410, 609, 6], [435, 604, 3],
  [447, 605, 4], [483, 596, 4], [486, 607, 3], [493, 642, 4], [487, 660, 5], [637, 652, 6], [695, 683, 4], [715, 680, 4], [716, 698, 6], [731, 684, 4],
  [743, 694, 4], [722, 665, 3], [681, 621, 4], [739, 605, 4], [781, 617, 5], [433, 711, 6], [418, 714, 4], [386, 735, 6], [406, 730, 3], [765, 734, 4],
  [639, 764, 4], [648, 779, 6], [666, 776, 3], [640, 794, 4], [660, 793, 3], [704, 781, 6], [707, 769, 3], [792, 785, 4], [800, 811, 6], [815, 802, 4],
  [25, 796, 4], [28, 742, 4], [117, 738, 4], [188, 788, 4], [203, 788, 6], [162, 801, 4], [175, 796, 4], [117, 808, 5], [84, 820, 4], [98, 822, 5],
  [112, 822, 5], [78, 832, 4], [168, 813, 4], [297, 765, 5], [293, 747, 4], [303, 735, 6], [335, 734, 5], [300, 785, 3], [321, 811, 6],
  [337, 810, 4], [356, 812, 5], [420, 768, 5], [406, 778, 4], [380, 758, 4], [62, 883, 5], [69, 907, 4], [88, 909, 5], [87, 925, 6], [97, 937, 4],
  [69, 942, 4], [69, 981, 3], [93, 981, 5], [33, 1096, 4], [54, 1108, 5], [73, 1111, 4], [14, 1047, 5], [196, 1140, 5], [200, 1153, 3], [217, 1156, 6],
  [80, 1160, 4], [92, 1166, 4], [72, 1174, 4], [108, 1166, 3], [161, 1183, 7], [182, 1179, 5], [197, 1177, 4], [212, 1177, 5], [280, 1159, 6], [165, 1201, 3],
  [181, 1204, 4], [36, 1210, 6], [302, 1148, 4], [356, 1119, 5], [369, 1132, 4], [353, 1137, 6], [436, 1110, 4], [449, 1110, 4], [465, 1104, 5], [430, 1123, 4],
  [485, 1101, 3], [412, 1061, 3], [492, 1056, 4], [499, 1070, 6], [570, 1080, 5], [536, 1088, 3], [615, 1089, 5], [520, 1145, 5], [510, 1132, 3], [556, 1166, 6],
  [426, 1172, 4], [414, 1181, 4], [428, 1191, 6], [402, 1191, 4], [462, 855, 6], [474, 852, 4], [524, 850, 4], [533, 857, 4], [607, 862, 4], [628, 861, 4],
  [609, 880, 4], [616, 897, 6], [682, 849, 6], [700, 850, 6], [720, 844, 4], [773, 850, 6], [457, 919, 5], [476, 910, 3], [539, 941, 4], [516, 950, 4],
  [526, 958, 4], [544, 957, 5], [749, 917, 4], [766, 932, 6], [761, 913, 4], [770, 947, 4], [762, 963, 4], [825, 964, 6], [600, 984, 4], [614, 985, 4],
  [470, 1018, 6], [561, 1005, 4], [568, 1020, 4], [579, 1035, 7], [513, 1039, 4], [762, 1032, 5], [776, 1029, 4], [786, 1026, 4], [817, 1028, 6],
  [713, 1045, 4], [730, 1041, 6], [777, 1049, 4], [815, 1061, 4], [703, 1094, 7], [672, 1083, 8], [750, 1100, 4], [785, 1132, 6], [697, 1143, 4], [649, 1190, 4],
  [783, 1200, 5], [763, 1220, 4], [688, 1222, 4], [801, 1172, 3], [207, 940, 5], [180, 898, 5], [187, 966, 4], [200, 960, 4], [120, 898, 4],
];

const LETTERS = [
  ['42', 128, 154, -10, 32], ['W', 362, 148, 0, 28], ['24', 658, 208, -8, 38], ['BFF', 588, 300, 30, 32],
  ['XA', 434, 1084, 12, 34], ['09:28', 534, 1134, -14, 26], ['Hi', 497, 1006, 0, 30],
];

function Wallpaper() {
  return (
    <svg className="pointer-events-none absolute inset-0 h-full w-full" aria-hidden="true">
      <defs>
        <pattern id="wallpaper" x="-9" y="-118" width="825" height="1234" patternUnits="userSpaceOnUse">
          <g id="doodles" fill="none" stroke="#161f26" strokeWidth="2" strokeLinejoin="round" strokeLinecap="round">
            {DOODLES.map(([kind, x, y, angle = 0, scale = 1], i) => (
              <g key={i} transform={`translate(${x} ${y}) rotate(${angle}) scale(${scale})`} strokeWidth={2 / scale}>{SHAPES[kind]}</g>
            ))}
            {DOTS.map(([x, y, r], i) => <circle key={i} cx={x} cy={y} r={r} />)}
            {LETTERS.map(([text, x, y, angle, size]) => (
              <text key={text} transform={`translate(${x} ${y}) rotate(${angle})`} fontSize={size} fontWeight="700" strokeWidth="1.5">{text}</text>
            ))}
          </g>
          <use href="#doodles" x="-825" />
          <use href="#doodles" x="825" />
        </pattern>
      </defs>
      <rect width="100%" height="100%" fill="url(#wallpaper)" />
    </svg>
  );
}

function DoubleCheck() {
  return (
    <svg className="h-[22px] w-8" viewBox="0 0 32 22" fill="none" stroke="currentColor" strokeWidth="2.6" aria-hidden="true">
      <path d="M1.5 12.5 6.8 18.3 21.5 1.8M12.8 16 15.4 18.6 30.5 1.8" strokeLinejoin="round" />
    </svg>
  );
}

function Tail({ out }) {
  return (
    <svg
      className={out ? 'absolute top-0 -right-[15px] h-6 w-4 text-[#005c4b]' : 'absolute top-0 -left-[15px] h-6 w-4 -scale-x-100 text-[#202c33]'}
      viewBox="0 0 16 24"
      fill="currentColor"
      aria-hidden="true"
    >
      <path d="M0 0H12.5Q16.5 .4 14.4 3.6L1 22V24H0Z" />
    </svg>
  );
}

function Message({ out, tail, stacked, edited, time, lines }) {
  return (
    <li className={`flex ${out ? 'justify-end' : 'justify-start'} ${tail ? 'mt-6' : 'mt-1'}`}>
      <div
        className={`relative flex rounded-[15px] pt-3 pr-3.5 pb-1.5 pl-[18px] ${out ? 'bg-[#005c4b]' : 'bg-[#202c33]'} ${
          stacked ? 'w-[65%] flex-col' : 'gap-4'
        } ${tail ? (out ? 'rounded-tr-none' : 'rounded-tl-none') : ''}`}
      >
        {tail && <Tail out={out} />}
        <p className={`text-[27px] leading-[38px] font-medium whitespace-nowrap text-[#e9edef] ${stacked ? '' : 'pb-2.5'}`}>
          {lines.map((parts, i) => (
            <span key={i} className="flex items-center">
              {parts.map((part, j) =>
                part.mask ? <span key={j} className={`shrink-0 ${MASKS[part.mask]}`} /> : <span key={j}>{part}</span>
              )}
            </span>
          ))}
        </p>
        <div className={`flex items-center gap-2 self-end text-[22px] leading-[30px] font-medium text-white/60 ${stacked ? 'pt-[18px]' : ''}`}>
          {edited && <span>Edited</span>}
          <time>{time}</time>
          {out && <DoubleCheck />}
        </div>
      </div>
    </li>
  );
}

function ChatHeader() {
  return (
    <header className="flex h-[118px] shrink-0 items-center border-b-2 border-[#263238] bg-[#202c33] pr-[42px] pb-0.5 pl-[31px]">
      <svg className="mb-0.5 h-20 w-20 shrink-0" viewBox="0 0 80 80" aria-hidden="true">
        <circle cx="40" cy="40" r="40" fill="#6a7175" />
        <circle cx="40" cy="33" r="14" fill="#cfd4d6" />
        <path d="M13.5 67C19 57 29 52 40 52S61 57 66.500 67C59 74.500 50 78 40 78S21 74.500 13.500 67Z" fill="#cfd4d6" />
      </svg>
      <h1 className="ml-[30px] flex-1 text-[31px] leading-[42px] font-medium text-[#e9edef]">Dolandırıcı</h1>
      <button type="button" aria-label="Görüntülü arama" className="flex h-[72px] w-[124px] items-center rounded-full border-2 border-[#2f3b43] pl-[25px] text-[#4b5a64]">
        <svg className="h-6 w-10" viewBox="0 0 40 24" fill="currentColor" aria-hidden="true">
          <rect width="28" height="24" rx="4" />
          <path d="M31 8.500 36.500 3.300Q39 2 39 4.500V19.500Q39 22 36.500 20.700L31 15.500Z" />
        </svg>
        <svg className="ml-[18px] h-3 w-3" viewBox="0 0 12 12" fill="none" stroke="currentColor" strokeWidth="2" aria-hidden="true">
          <path d="M1 3.500 6 8.500 11 3.500" />
        </svg>
      </button>
      <button type="button" aria-label="Ara" className="ml-6 flex h-12 w-12 items-center justify-center text-[#aebac1]">
        <svg className="h-10 w-10" viewBox="0 0 40 40" fill="none" stroke="currentColor" strokeWidth="4" aria-hidden="true">
          <circle cx="16" cy="15.500" r="11.300" />
          <path d="M24 24 36.500 36.500" />
        </svg>
      </button>
      <button type="button" aria-label="Menü" className="ml-[52px] flex h-12 w-12 items-center justify-center text-[#aebac1]">
        <svg className="h-8 w-2" viewBox="0 0 8 32" fill="currentColor" aria-hidden="true">
          <circle cx="4" cy="4" r="4" />
          <circle cx="4" cy="16" r="4" />
          <circle cx="4" cy="28" r="4" />
        </svg>
      </button>
    </header>
  );
}

function Sidebar() {
  const rows = ['', '', '', 'active', '', '', ''];
  return (
    <aside className="w-[9px] shrink-0 border-r border-[#2a353c] bg-[#111b21] pt-[296px]">
      {rows.map((state, i) => (
        <div key={i} className={state === 'active' ? 'h-36 bg-[#2a3942]' : 'h-36 border-b-2 border-[#222d34]'} />
      ))}
    </aside>
  );
}

export default function App() {
  return (
    <div className="flex h-screen overflow-hidden bg-[#0a141a] font-['Inter','Liberation_Sans',sans-serif]">
      <Sidebar />
      <div className="flex min-w-0 flex-1 flex-col">
        <ChatHeader />
        <main className="relative flex min-h-0 flex-1 flex-col justify-end overflow-hidden pr-[120px] pb-6 pl-[127px]">
          <Wallpaper />
          <ul className="relative">
            {MESSAGES.map((message) => (
              <Message key={message.id} {...message} />
            ))}
          </ul>
          <button
            type="button"
            aria-label="En alta in"
            className="absolute right-4 bottom-[34px] flex h-[84px] w-[84px] items-center justify-center rounded-full bg-[#202c33] text-[#7b868c]"
          >
            <svg className="mt-1 h-5 w-8" viewBox="0 0 32 20" fill="none" stroke="currentColor" strokeWidth="4" aria-hidden="true">
              <path d="M3 3 16 16 29 3" />
            </svg>
          </button>
        </main>
        <footer className="h-0.5 shrink-0 bg-[#202c33]" />
      </div>
    </div>
  );
}
